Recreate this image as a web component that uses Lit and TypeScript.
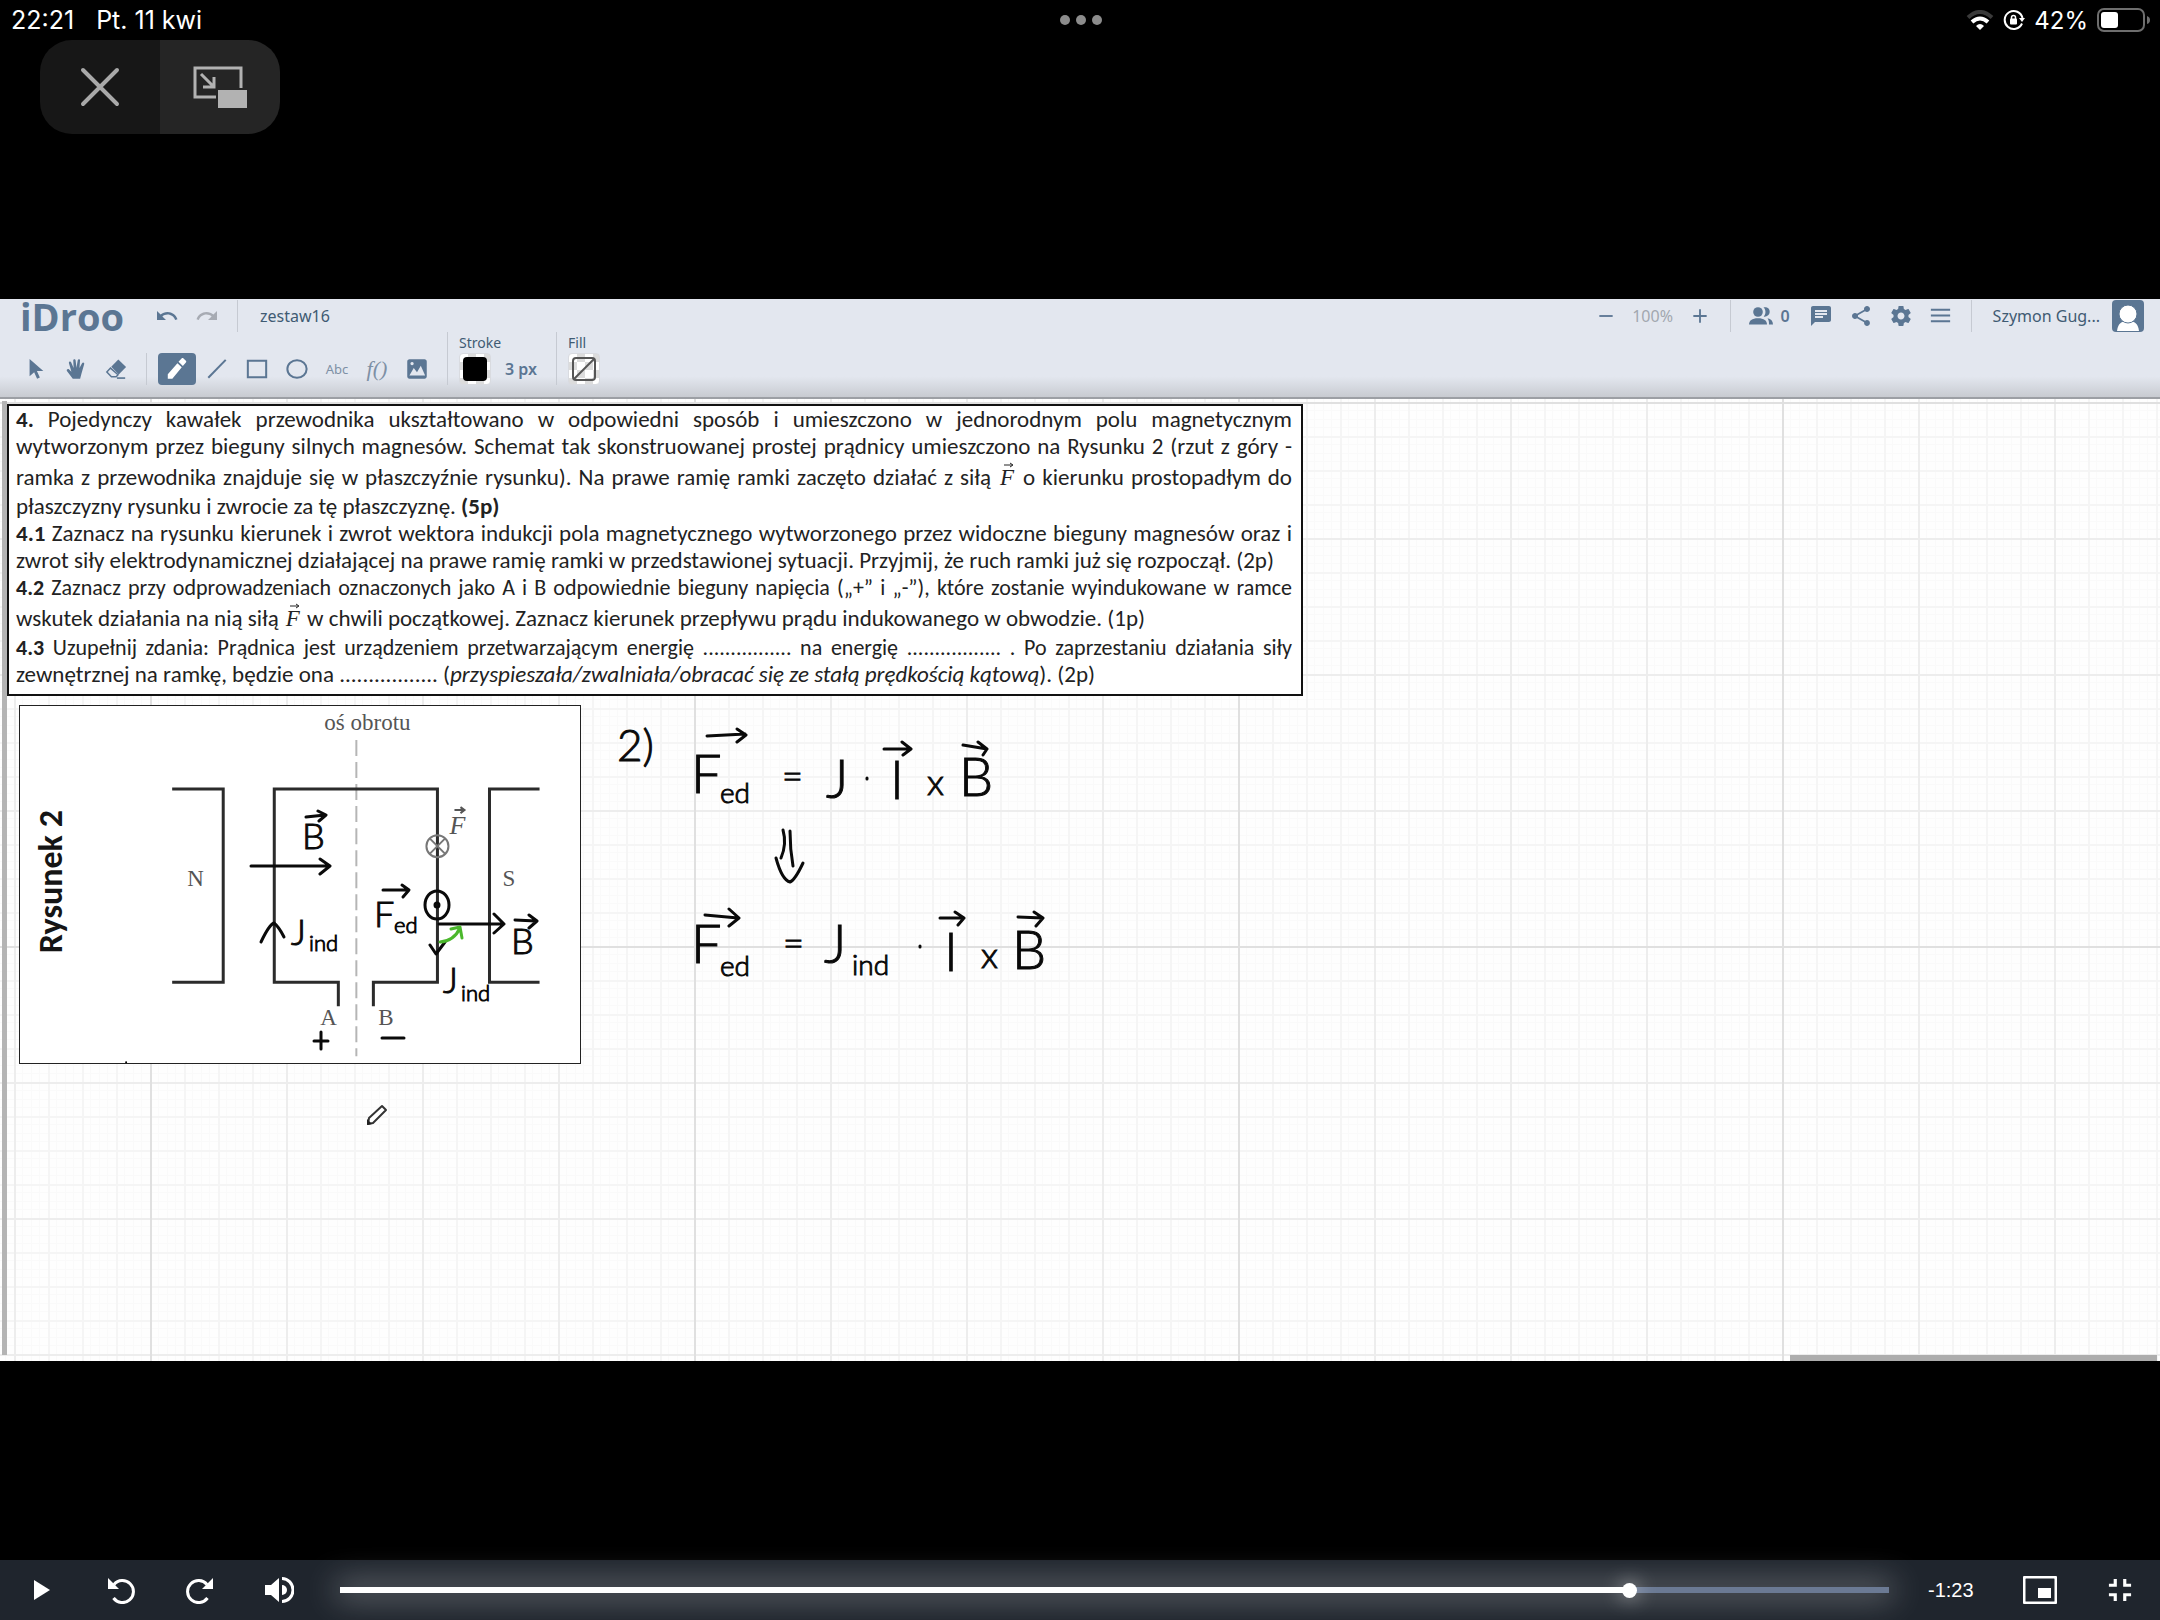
import { LitElement, html, css, svg } from "lit";
import { customElement, state } from "lit/decorators.js";

const icons: Record<string, unknown> = {
  undo: svg`<path d="M12.5 8c-2.65 0-5.05.99-6.9 2.6L2 7v9h9l-3.62-3.62c1.39-1.16 3.16-1.88 5.12-1.88 3.54 0 6.55 2.31 7.6 5.5l2.37-.78C21.08 11.03 17.15 8 12.5 8z"/>`,
  redo: svg`<path d="M18.4 10.6C16.55 8.99 14.15 8 11.5 8c-4.65 0-8.58 3.03-9.96 7.22L3.9 16c1.05-3.19 4.05-5.5 7.6-5.5 1.95 0 3.73.72 5.12 1.88L13 16h9V7l-3.6 3.6z"/>`,
  cursor: svg`<path d="M5 1v19l5-4.500 3.200 7 3-1.300-3.200-6.900H20z"/>`,
  hand: svg`<path d="M8.500 22.500 2.300 14.500c-1.300-1.800.8-3.400 2.200-2L7 15 4.300 5.600c-.5-1.900 1.900-2.500 2.500-.8L9.400 11 9 2.800c0-1.900 2.400-2 2.600-.1L12.500 10.500 13.900 2.400c.4-1.700 2.700-1.300 2.500.4L15.800 11l2.800-5.400c.9-1.500 2.900-.6 2.300 1.100L18 17l-1.500 5.500z"/>`,
  eraser: svg`<path d="M14.500 1.500 23 9.800 15 18 6.800 9.600z"/><path d="M6 11 2 15.200l5 5.300h5.200l2-2.200z" fill="none" stroke="currentColor" stroke-width="1.600"/><path d="M13 21h9v1.800h-9z"/>`,
  line: svg`<path d="M2.500 21.500 21.500 2" stroke="currentColor" stroke-width="2.200" fill="none"/>`,
  rect: svg`<path d="M2 3h20v18H2z" stroke="currentColor" stroke-width="2.200" fill="none"/>`,
  ellipse: svg`<ellipse cx="12" cy="12" rx="10.500" ry="9.500" stroke="currentColor" stroke-width="2.200" fill="none"/>`,
  image: svg`<path d="M21 19V5c0-1.100-.9-2-2-2H5c-1.100 0-2 .9-2 2v14c0 1.100.9 2 2 2h14c1.100 0 2-.9 2-2zM5 18l4-7 3 4 3.500-6 4 9zM7.500 5.500a1.500 1.500 0 1 1-.1 0z" fill-rule="evenodd"/>`,
  pencil: svg`<path d="M3.500 16.800V21h4.200L16.400 10.400l-4-3.800zM13.400 5.400l4 3.900L20.200 6c.5-.6.5-1.200 0-1.700L18 2.200c-.6-.5-1.300-.4-1.800.1z"/>`,
  minus: svg`<path d="M4 12h16" stroke="currentColor" stroke-width="2.200"/>`,
  plus: svg`<path d="M4 12h16M12 4v16" stroke="currentColor" stroke-width="2.200"/>`,
  people: svg`<circle cx="9" cy="8" r="4.800"/><path d="M0 20.500c0-4 3-6.300 9-6.300s9 2.300 9 6.300zM14.500 3.300c4.500-.8 6.400 1.800 6.200 4.800-.2 3-2.700 5-6 4.600 2.400-2.700 2.400-6.700-.2-9.400zM18.500 14.300c3.500.6 5.500 2.800 5.500 6.200h-4c0-2.600-.2-4.300-1.500-6.200z"/>`,
  chat: svg`<path d="M20 2H4c-1.100 0-1.990.9-1.990 2L2 22l4-4h14c1.100 0 2-.9 2-2V4c0-1.100-.9-2-2-2zM6 9h12v2H6V9zm8 5H6v-2h8v2zm4-6H6V6h12v2z"/>`,
  share: svg`<path d="M18 16.080c-.76 0-1.440.3-1.960.77L8.910 12.700c.05-.23.090-.46.090-.7s-.04-.47-.09-.7l7.050-4.110c.54.5 1.250.81 2.040.81 1.660 0 3-1.340 3-3s-1.340-3-3-3-3 1.340-3 3c0 .24.040.47.090.7L8.040 9.810C7.500 9.310 6.790 9 6 9c-1.660 0-3 1.340-3 3s1.340 3 3 3c.79 0 1.500-.31 2.040-.81l7.120 4.160c-.05.21-.08.43-.08.65 0 1.610 1.310 2.920 2.920 2.920s2.920-1.310 2.920-2.920-1.310-2.920-2.920-2.920z"/>`,
  gear: svg`<path d="M19.430 12.980c.04-.32.070-.64.070-.98s-.03-.66-.07-.98l2.110-1.650c.19-.15.240-.42.120-.64l-2-3.460c-.12-.22-.39-.3-.61-.22l-2.490 1c-.52-.4-1.080-.73-1.690-.98l-.38-2.650C14.460 2.180 14.250 2 14 2h-4c-.25 0-.46.180-.49.420l-.38 2.650c-.61.25-1.170.59-1.690.98l-2.490-1c-.23-.09-.49 0-.61.220l-2 3.460c-.13.220-.07.490.12.640l2.110 1.650c-.04.320-.07.650-.07.980s.03.660.070.980l-2.110 1.650c-.19.150-.24.420-.12.640l2 3.460c.12.220.39.300.61.220l2.490-1c.52.400 1.080.730 1.690.980l.38 2.650c.03.240.24.420.49.420h4c.25 0 .46-.18.490-.42l.38-2.650c.61-.25 1.170-.59 1.690-.98l2.490 1c.23.090.49 0 .61-.22l2-3.460c.12-.22.070-.49-.12-.64l-2.110-1.650zM12 15.500c-1.930 0-3.500-1.570-3.500-3.500s1.570-3.500 3.500-3.500 3.500 1.570 3.500 3.500-1.570 3.500-3.500 3.500z"/>`,
  menu: svg`<path d="M1 5.500h22M1 12h22M1 18.500h22" stroke="currentColor" stroke-width="2.200"/>`,
};

const icon = (name: string, size = 24) =>
  html`<svg class="icon" width=${size} height=${size} viewBox="0 0 24 24" aria-hidden="true">${icons[name]}</svg>`;

const vectorF = html`<span class="vec"><svg class="vec-arrow" width="10" height="6" viewBox="0 0 10 6" aria-hidden="true"><path d="M0 3h8M6 1l3 2-3 2" fill="none" stroke="#222" /></svg>F</span>`;

@customElement("idroo-toolbar")
export class IdrooToolbar extends LitElement {
  @state() private tool = "pencil";

  static styles = css`
    :host {
      display: block;
      color: #5b7693;
      font-family: "Noto Sans", "Open Sans", sans-serif;
      background: linear-gradient(#e3e7ef 0, #e3e7ef 79%, #c8cbd1 100%);
      border-bottom: 2px solid #9c9fa4;
    }
    .row { display: flex; align-items: center; height: 33px; }
    .tools { height: 53px; align-items: flex-end; padding: 0 0 12px 17px; }
    button {
      all: unset;
      box-sizing: border-box;
      display: flex;
      align-items: center;
      justify-content: center;
      width: 38px;
      height: 32px;
      border-radius: 4px;
    }
    .icon { fill: currentColor; display: block; }
    .set { display: flex; gap: 2px; }
    .on { background: #5b7693; color: #fff; }
    .off { color: #a7abb3; }
    .logo {
      width: 128px;
      padding-left: 20px;
      font: 700 38px/32px "Open Sans", sans-serif;
      text-decoration: none;
      color: inherit;
    }
    .sep { width: 1px; height: 32px; background: #c6cad2; margin: 0 11px; }
    .tall { height: 53px; }
    .name { color: #3f5b73; font-size: 16px; }
    .title { margin-left: 11px; }
    .right { margin-left: auto; display: flex; align-items: center; }
    .right button { width: 40px; }
    .right .sep { margin: 0 10px; }
    .zoom { width: 54px; text-align: center; color: #a2a7b0; font-size: 16px; }
    .count { font-size: 16px; font-weight: 600; width: 20px; }
    .abc { font-size: 13px; color: #7e90a5; }
    .fn { font: italic 22px "Liberation Serif", serif; color: #7e90a5; }
    .field { display: flex; flex-direction: column; }
    .label { font-size: 14px; line-height: 20px; color: #3f5b73; }
    .pair { display: flex; align-items: center; gap: 14px; }
    .swatch {
      width: 32px;
      border: 1px solid #d9dbe0;
      background: repeating-conic-gradient(#dcdcdc 0 25%, #fff 0 50%) 0 0 / 16px 16px;
    }
    .ink { width: 24px; height: 24px; border-radius: 4px; background: #000; }
    .px { font-size: 16px; font-weight: 600; min-width: 40px; }
    .avatar { margin: 0 16px 0 12px; display: block; }
  `;

  private toolButton(name: string, label: string, body: unknown = icon(name, 22)) {
    return html`<button
      class=${this.tool === name ? "on" : ""}
      aria-label=${label}
      @click=${() => (this.tool = name)}
    >${body}</button>`;
  }

  render() {
    return html`
      <div class="row">
        <a class="logo" href="#">iDroo</a>
        <div class="set">
          <button aria-label="Undo">${icon("undo", 24)}</button>
          <button class="off" aria-label="Redo">${icon("redo", 24)}</button>
        </div>
        <span class="sep"></span>
        <span class="name title">zestaw16</span>
        <div class="right">
          <button aria-label="Zoom out">${icon("minus", 20)}</button>
          <span class="zoom">100%</span>
          <button aria-label="Zoom in">${icon("plus", 20)}</button>
          <span class="sep"></span>
          <button aria-label="Participants">${icon("people", 24)}</button>
          <span class="count">0</span>
          <button aria-label="Chat">${icon("chat", 24)}</button>
          <button aria-label="Share">${icon("share", 24)}</button>
          <button aria-label="Settings">${icon("gear", 24)}</button>
          <button aria-label="Menu">${icon("menu", 21)}</button>
          <span class="sep"></span>
          <span class="name title">Szymon Gug...</span>
          <svg class="avatar" width="32" height="32" viewBox="0 0 32 32" aria-hidden="true">
            <rect width="32" height="32" rx="4" fill="#5b7693" />
            <path d="M5 31c1-8 5-10 11-10s10 2 11 10z" fill="#fff" />
            <circle cx="16" cy="14" r="9" fill="#fff" stroke="#5b7693" />
          </svg>
        </div>
      </div>
      <div class="row tools">
        <div class="set">
          ${this.toolButton("cursor", "Select")} ${this.toolButton("hand", "Pan")}
          ${this.toolButton("eraser", "Eraser")}
        </div>
        <span class="sep"></span>
        <div class="set">
          ${this.toolButton("pencil", "Pencil", icon("pencil", 26))} ${this.toolButton("line", "Line")}
          ${this.toolButton("rect", "Rectangle")} ${this.toolButton("ellipse", "Ellipse")}
          ${this.toolButton("text", "Text", html`<span class="abc">Abc</span>`)}
          ${this.toolButton("formula", "Formula", html`<span class="fn">f()</span>`)}
          ${this.toolButton("image", "Image", icon("image", 26))}
        </div>
        <span class="sep tall"></span>
        <div class="field">
          <span class="label">Stroke</span>
          <div class="pair">
            <button class="swatch" aria-label="Stroke colour"><span class="ink"></span></button>
            <span class="px">3 px</span>
          </div>
        </div>
        <span class="sep tall"></span>
        <div class="field">
          <span class="label">Fill</span>
          <button class="swatch" aria-label="Fill colour">
            <svg width="26" height="26" viewBox="0 0 26 26" aria-hidden="true">
              <rect x="2" y="2" width="22" height="22" rx="3" fill="none" stroke="#555" stroke-width="2" />
              <path d="M3 23 23 3" stroke="#555" stroke-width="2" />
            </svg>
          </button>
        </div>
      </div>
    `;
  }
}

@customElement("idroo-board")
export class IdrooBoard extends LitElement {
  static styles = css`
    :host { display: block; position: relative; flex: 1; background: #fefefe; overflow: hidden; }
    .layer { position: absolute; inset: 0; width: 100%; height: 100%; }
    .content { position: relative; padding-top: 5px; }
    .edge { position: absolute; left: 2px; top: 2px; bottom: 6px; width: 5px; background: #b4b4b4; }
    .scroll { position: absolute; right: 3px; bottom: 0; width: 17%; height: 6px; background: #adadad; }
    .problem {
      box-sizing: border-box;
      width: 60%;
      margin-left: 7px;
      padding: 0 9px 6px 7px;
      border: 2px solid #111;
      background: #fff;
      color: #222;
      font: 23px/27px "Carlito", "Lato", sans-serif;
    }
    .problem p { margin: 0; }
    .line { display: block; white-space: nowrap; text-align: justify; text-align-last: justify; }
    .end { text-align-last: left; }
    .dense { font-size: 22px; }
    .raised { padding: 4px 0 2px; }
    .vec { position: relative; display: inline-block; font: italic 23px/20px "Liberation Serif", serif; margin: 0 2px; }
    .vec-arrow { position: absolute; left: 4px; top: -6px; }
    .figure { display: block; width: 26%; margin: 9px 0 0 19px; background: #fff; outline: 1px solid #222; outline-offset: -1px; border-top: 1px solid #222; box-sizing: border-box; }
    .print { font: 23px "Liberation Serif", serif; fill: #555; }
    .caption { font: 700 34px "Carlito", "Lato", sans-serif; fill: #151515; }
    .vf { font: italic 26px "Liberation Serif", serif; fill: #555; }
    .pen { fill: none; stroke: #0a0a0a; stroke-width: 3; stroke-linecap: round; stroke-linejoin: round; }
    .hand { font-family: "Lato", sans-serif; font-weight: 300; fill: #0a0a0a; stroke: #0a0a0a; stroke-width: 1; }
    .xl { font-size: 54px; }
    .num { font-size: 44px; }
    .lg { font-size: 36px; }
    .md { font-size: 28px; }
    .sm { font-size: 22px; }
  `;

  private problem() {
    return html`<div class="problem">
      <p>
        <span class="line"><b>4.</b> Pojedynczy kawałek przewodnika ukształtowano w odpowiedni sposób i umieszczono w jednorodnym polu magnetycznym</span>
        <span class="line">wytworzonym przez bieguny silnych magnesów. Schemat tak skonstruowanej prostej prądnicy umieszczono na Rysunku 2 (rzut z góry -</span>
        <span class="line raised">ramka z przewodnika znajduje się w płaszczyźnie rysunku). Na prawe ramię ramki zaczęto działać z siłą ${vectorF} o kierunku prostopadłym do</span>
        <span class="line end">płaszczyzny rysunku i zwrocie za tę płaszczyznę. <b>(5p)</b></span>
      </p>
      <p>
        <span class="line"><b>4.1</b> Zaznacz na rysunku kierunek i zwrot wektora indukcji pola magnetycznego wytworzonego przez widoczne bieguny magnesów oraz i</span>
        <span class="line end">zwrot siły elektrodynamicznej działającej na prawe ramię ramki w przedstawionej sytuacji. Przyjmij, że ruch ramki już się rozpoczął. (2p)</span>
      </p>
      <p>
        <span class="line dense"><b>4.2</b> Zaznacz przy odprowadzeniach oznaczonych jako A i B odpowiednie bieguny napięcia („+” i „-”), które zostanie wyindukowane w ramce</span>
        <span class="line end raised">wskutek działania na nią siłą ${vectorF} w chwili początkowej. Zaznacz kierunek przepływu prądu indukowanego w obwodzie. (1p)</span>
      </p>
      <p>
        <span class="line dense"><b>4.3</b> Uzupełnij zdania: Prądnica jest urządzeniem przetwarzającym energię ................ na energię ................. . Po zaprzestaniu działania siły</span>
        <span class="line end">zewnętrznej na ramkę, będzie ona ................. (<i>przyspieszała/zwalniała/obracać się ze stałą prędkością kątową</i>). (2p)</span>
      </p>
    </div>`;
  }

  private figure() {
    return html`<svg class="figure" viewBox="19 705 561 358" role="img" aria-label="Rysunek 2">
      <path d="M356 739V1055" stroke="#b5b5b5" stroke-width="2" stroke-dasharray="16 6" />
      <g fill="none" stroke="#2b2b2b" stroke-width="3">
        <path d="M172 788H223V981H172" />
        <path d="M338 1005V981H274V788H437V981H373V1005" />
        <path d="M539 788H489V981H539" />
      </g>
      <text class="print" x="324" y="729">oś obrotu</text>
      <text class="print" x="187" y="885">N</text>
      <text class="print" x="502" y="885">S</text>
      <text class="print" x="320" y="1024">A</text>
      <text class="print" x="378" y="1024">B</text>
      <text class="vf" x="449" y="833">F</text>
      <path d="M454 809H463M460 806l4 3-4 3" fill="none" stroke="#555" stroke-width="2" />
      <g fill="none" stroke="#777" stroke-width="2">
        <circle cx="437" cy="845" r="11" />
        <path d="M429 837 445 853M445 837 429 853" />
      </g>
      <text class="caption" transform="translate(62 952) rotate(-90)">Rysunek 2</text>
      <circle cx="126" cy="1061" r="1" />
    </svg>`;
  }

  private ink() {
    return html`<svg class="layer" viewBox="0 399 2160 962" preserveAspectRatio="xMinYMin meet" aria-hidden="true">
      <g class="hand xl">
        <text class="num" x="617" y="761">2)</text>
        <text x="691" y="793">F</text>
        <text class="md" x="720" y="803">ed</text>
        <text class="lg" x="782" y="789">=</text>
        <text x="826" y="798">J</text>
        <text x="891" y="799">l</text>
        <text class="lg" x="927" y="795">x</text>
        <text x="959" y="796">B</text>
        <text x="691" y="963">F</text>
        <text class="md" x="720" y="976">ed</text>
        <text class="lg" x="783" y="956">=</text>
        <text x="824" y="963">J</text>
        <text class="md" x="852" y="975">ind</text>
        <text x="945" y="971">l</text>
        <text class="lg" x="981" y="968">x</text>
        <text x="1012" y="969">B</text>
      </g>
      <g class="hand lg">
        <text x="302" y="849">B</text>
        <text x="291" y="945">J</text>
        <text class="sm" x="309" y="951">ind</text>
        <text x="374" y="927">F</text>
        <text class="sm" x="394" y="933">ed</text>
        <text x="511" y="954">B</text>
        <text x="443" y="993">J</text>
        <text class="sm" x="461" y="1001">ind</text>
      </g>
      <g class="pen">
        <path d="M707 736 745 734M737 729l9 6-9 7M884 749h26M902 742l9 7-8 6M963 745l24 4M978 742l9 7-4 6" />
        <path d="M705 915l33 3M729 909l10 9-10 8M940 918h24M955 912l9 6-6 7M1018 917l25 1M1034 912l9 6-7 8" />
        <path d="M783 830q4 14-2 28M790 831q0 18 3 35M776 858q6 22 14 24 5-2 13-19" />
        <path d="M867 778v1M920 946v1" />
        <path d="M251 866H329M320 859l10 7-10 8M306 817l19-2M318 811l8 4-7 6" />
        <path d="M261 942q8-17 13-19 5 4 10 14M383 890h25M402 885l7 5-6 7" />
        <path d="M439 924H503M494 914l10 10-10 9M515 920l21 1M529 915l8 6-8 7" />
        <path d="M430 945l6 9 9-12M321 1032v17M314 1041h14M382 1038h22" />
        <ellipse cx="437" cy="905" rx="12" ry="14" />
        <circle cx="437" cy="905" r="2" />
        <path d="M440 942q14-1 20-14M451 929l9-2 2 11" stroke="#4bb82c" />
      </g>
      <path d="M368 1124l1-6 13-12 4 4-13 13z" fill="#fff" stroke="#333" stroke-width="2" stroke-linejoin="round" />
      <path d="M367 1125v-6l5 5z" fill="#222" />
    </svg>`;
  }

  render() {
    return html`
      <svg class="layer" aria-hidden="true">
        <defs>
          <pattern id="fine" x="14" y="3" width="34" height="34" patternUnits="userSpaceOnUse">
            <path d="M8 0V34M17 0V34M25 0V34M0 8H34M0 17H34M0 25H34" transform="translate(.5 .5)" stroke="#fafafa" />
            <path d="M0 1H34M1 0V34" stroke="#f5f5f5" stroke-width="2" />
          </pattern>
          <pattern id="mid" x="14" y="3" width="136" height="136" patternUnits="userSpaceOnUse">
            <path d="M0 1H136M1 0V136" stroke="#ededed" stroke-width="2" />
          </pattern>
          <pattern id="major" x="150" y="3" width="544" height="544" patternUnits="userSpaceOnUse">
            <path d="M0 1H544M1 0V544" stroke="#e0e0e0" stroke-width="2" />
          </pattern>
        </defs>
        <rect width="100%" height="100%" fill="url(#fine)" />
        <rect width="100%" height="100%" fill="url(#mid)" />
        <rect width="100%" height="100%" fill="url(#major)" />
      </svg>
      <span class="edge"></span>
      <div class="content">${this.problem()} ${this.figure()}</div>
      ${this.ink()}
      <span class="scroll"></span>
    `;
  }
}

@customElement("video-controls")
export class VideoControls extends LitElement {
  @state() private position = 836;

  static styles = css`
    :host {
      display: flex;
      align-items: center;
      box-sizing: border-box;
      height: 60px;
      padding: 0 10px 0 12px;
      background: #1f252d;
      color: #fff;
      font-family: "Liberation Sans", sans-serif;
    }
    button { all: unset; display: flex; align-items: center; justify-content: center; width: 60px; height: 60px; }
    svg { display: block; }
    .group { display: flex; gap: 19px; }
    .seek {
      appearance: none;
      flex: 1;
      height: 6px;
      margin: 0 39px 0 31px;
      background: linear-gradient(#fff, #fff) 0 0 / var(--played) 100% no-repeat #6b7a94;
      box-shadow: 0 0 32px 4px #ffffff70;
    }
    .seek::-webkit-slider-thumb {
      appearance: none;
      width: 15px;
      height: 15px;
      border-radius: 50%;
      background: #fff;
      box-shadow: 0 0 20px #ffffffb0;
    }
    .time { font-size: 20px; width: 82px; }
    .ends { display: flex; gap: 20px; }
  `;

  render() {
    return html`
      <div class="group">
        <button aria-label="Play"><svg width="24" height="24"><path d="M4 2v20l16-10z" fill="#fff" /></svg></button>
        <button aria-label="Rewind">
          <svg width="28" height="28" fill="none"><path d="M7 7.500A11 11 0 1 1 6.500 21" stroke="#fff" stroke-width="3" transform="translate(0 1)" /><path d="M1 2v11h11z" fill="#fff" /></svg>
        </button>
        <button aria-label="Forward">
          <svg width="28" height="28" fill="none"><path d="M21 7.500A11 11 0 1 0 21.500 21" stroke="#fff" stroke-width="3" transform="translate(0 1)" /><path d="M27 2v11H16z" fill="#fff" /></svg>
        </button>
        <button aria-label="Volume">
          <svg width="30" height="28"><path d="M1 9h6l8-7v24l-8-7H1z" fill="#fff" /><path d="M18 9a5 5 0 0 1 0 10z" fill="#fff" /><path d="M18 2.500a11 11.500 0 0 1 0 23" fill="none" stroke="#fff" stroke-width="3" /></svg>
        </button>
      </div>
      <input
        class="seek"
        type="range"
        min="0"
        max="1000"
        aria-label="Position"
        .value=${String(this.position)}
        style="--played:${this.position / 10}%"
        @input=${(e: Event) => (this.position = Number((e.target as HTMLInputElement).value))}
      />
      <span class="time">-1:23</span>
      <div class="ends">
        <button aria-label="Picture in picture">
          <svg width="34" height="28"><rect x="1" y="1" width="32" height="26" rx="2" fill="none" stroke="#fff" stroke-width="3" /><rect x="15" y="12" width="13" height="10" fill="#fff" /></svg>
        </button>
        <button aria-label="Exit full screen">
          <svg width="38" height="38" viewBox="0 0 24 24" fill="#fff"><path d="M5 16h3v3h2v-5H5v2zm3-8H5v2h5V5H8v3zm6 11h2v-3h3v-2h-5v5zm2-11V5h-2v5h5V8h-3z" /></svg>
        </button>
      </div>
    `;
  }
}

@customElement("app-root")
export class AppRoot extends LitElement {
  static styles = css`
    :host { display: flex; flex-direction: column; min-height: 100vh; background: #000; color: #fff; }
    .status {
      display: grid;
      grid-template-columns: 1fr auto 1fr;
      align-items: center;
      height: 40px;
      padding: 0 9px 0 11px;
      font: 400 24px "Inter", sans-serif;
    }
    .clock { display: flex; gap: 22px; font-size: 25px; }
    .system { display: flex; align-items: center; justify-content: flex-end; gap: 9px; }
    svg { display: block; }
    .stage { position: relative; flex: 1; display: flex; align-items: center; }
    .video { flex: 1; display: flex; flex-direction: column; aspect-ratio: 2160 / 1062; }
    .overlay { position: absolute; top: 0; left: 40px; display: flex; border-radius: 32px; overflow: hidden; }
    .overlay button { all: unset; display: flex; align-items: center; justify-content: center; width: 120px; height: 94px; background: #171717; }
    .overlay .pip { background: #252525; }
    .controls { position: absolute; left: 0; right: 0; bottom: 0; }
  `;

  render() {
    return html`
      <header class="status">
        <div class="clock"><span>22:21</span><span>Pt. 11 kwi</span></div>
        <svg width="42" height="10" fill="#8c8c8c" aria-hidden="true"><circle cx="5" cy="5" r="5" /><circle cx="21" cy="5" r="5" /><circle cx="37" cy="5" r="5" /></svg>
        <div class="system">
          <svg width="28" height="20" viewBox="0 0 28 20" fill="none" aria-hidden="true">
            <path d="M2 7.500Q14-3.500 26 7.500" stroke="#3a3a3a" stroke-width="4" />
            <path d="M6 12q8-7 16 0" stroke="#fff" stroke-width="4" />
            <path d="M10 16q4-4 8 0l-4 4z" fill="#fff" />
          </svg>
          <svg width="22" height="22" viewBox="0 0 22 22" fill="none" aria-hidden="true">
            <path d="M19 14.500A9 9 0 1 1 19.500 9" stroke="#fff" stroke-width="2" />
            <path d="M16 9h6l-3 4z" fill="#fff" />
            <rect x="7" y="9.500" width="7" height="6" rx="1" fill="#fff" />
            <path d="M8.500 10V8.500a2 2 0 0 1 4 0V10" stroke="#fff" stroke-width="1.500" />
          </svg>
          <span>42%</span>
          <svg width="54" height="24" viewBox="0 0 54 24" aria-hidden="true">
            <rect x="1" y="1" width="46" height="22" rx="6" fill="none" stroke="#6e6e6e" stroke-width="2" />
            <rect x="4" y="4" width="17" height="16" rx="3" fill="#fff" />
            <path d="M50 8q3 1 3 4t-3 4z" fill="#6e6e6e" />
          </svg>
        </div>
      </header>
      <main class="stage">
        <section class="video">
          <idroo-toolbar></idroo-toolbar>
          <idroo-board></idroo-board>
        </section>
        <div class="overlay">
          <button aria-label="Close">
            <svg width="42" height="42" aria-hidden="true"><path d="M4 4l34 34M38 4 4 38" stroke="#a9a9a9" stroke-width="4" stroke-linecap="round" /></svg>
          </button>
          <button class="pip" aria-label="Picture in picture">
            <svg width="54" height="42" fill="none" aria-hidden="true">
              <path d="M23 31H2V2H48V22" stroke="#b2b2b2" stroke-width="3" />
              <path d="M8 8 20 20M21 11V21H10" stroke="#b2b2b2" stroke-width="3" />
              <rect x="25" y="24" width="29" height="18" fill="#b2b2b2" />
            </svg>
          </button>
        </div>
        <video-controls class="controls"></video-controls>
      </main>
    `;
  }
}
